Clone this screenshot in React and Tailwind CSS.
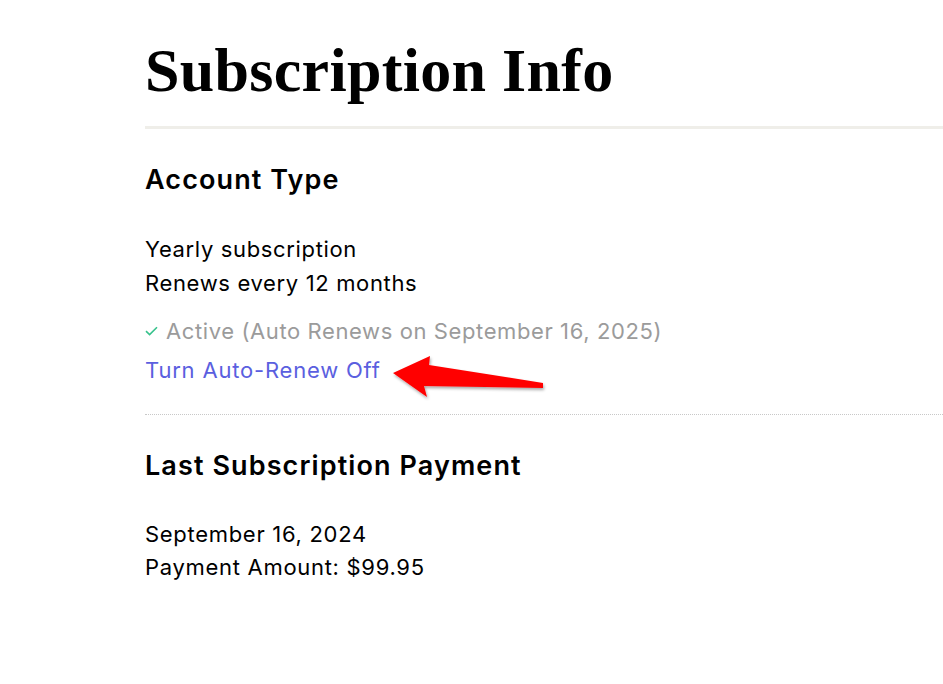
import React from 'react';

const sans = { fontFamily: 'Inter, "Noto Sans", sans-serif' };

const Arrow = () => (
  <svg
    className="absolute left-[246px] top-[1px]"
    width="160"
    height="50"
    viewBox="0 0 160 50"
  >
    <defs>
      <filter id="sh" x="-10%" y="-20%" width="130%" height="160%">
        <feDropShadow dx="1" dy="2" stdDeviation="1.5" floodColor="#000" floodOpacity="0.35" />
      </filter>
    </defs>
    <polygon
      points="2,19 39,2 38,11 152,29 152,34 33,32 36,43"
      fill="#ff0000"
      filter="url(#sh)"
    />
  </svg>
);

const App = () => {
  return (
    <div className="min-h-[684px] bg-white pl-[145px] text-black" style={sans}>
      {/* Title */}
      <h1
        className="pt-[34px] pb-[20px] text-[62px] leading-[72px] font-bold tracking-[0.3px]"
        style={{ fontFamily: '"Liberation Serif", "DejaVu Serif", serif' }}
      >
        Subscription Info
      </h1>
      <div className="h-[3px] bg-[#efeee9]" />

      {/* Account type */}
      <section className="border-b border-dotted border-[#c8c8c8] pb-[27px]">
        <h2 className="mt-[33px] text-[27px] leading-[36px] font-semibold tracking-[1.1px]">Account Type</h2>
        <div className="mt-[34px] text-[22px] leading-[34px] tracking-[0.65px]">
          <p>Yearly subscription</p>
          <p>Renews every 12 months</p>
        </div>
        <p className="mt-[15px] flex items-center text-[22px] leading-[32px] tracking-[0.6px] text-[#9b9b9b]">
          <svg className="mr-[8px]" width="13" height="10" viewBox="0 0 13 10">
            <path d="M1 5.2 L4.6 8.6 L12 1.2" fill="none" stroke="#37c28c" strokeWidth="1.6" />
          </svg>
          Active (Auto Renews on September 16, 2025)
        </p>
        <div className="relative mt-[6px]">
          <a href="#" className="text-[22px] leading-[34px] tracking-[0.8px] text-[#5b5fdf]">
            Turn Auto-Renew Off
          </a>
          <Arrow />
        </div>
      </section>

      {/* Last payment */}
      <section>
        <h2 className="mt-[33px] text-[27px] leading-[36px] font-semibold tracking-[1.1px]">
          Last Subscription Payment
        </h2>
        <div className="mt-[34px] text-[22px] leading-[33px] tracking-[0.7px]">
          <p>September 16, 2024</p>
          <p>Payment Amount: $99.95</p>
        </div>
      </section>
    </div>
  );
};

export default App;
